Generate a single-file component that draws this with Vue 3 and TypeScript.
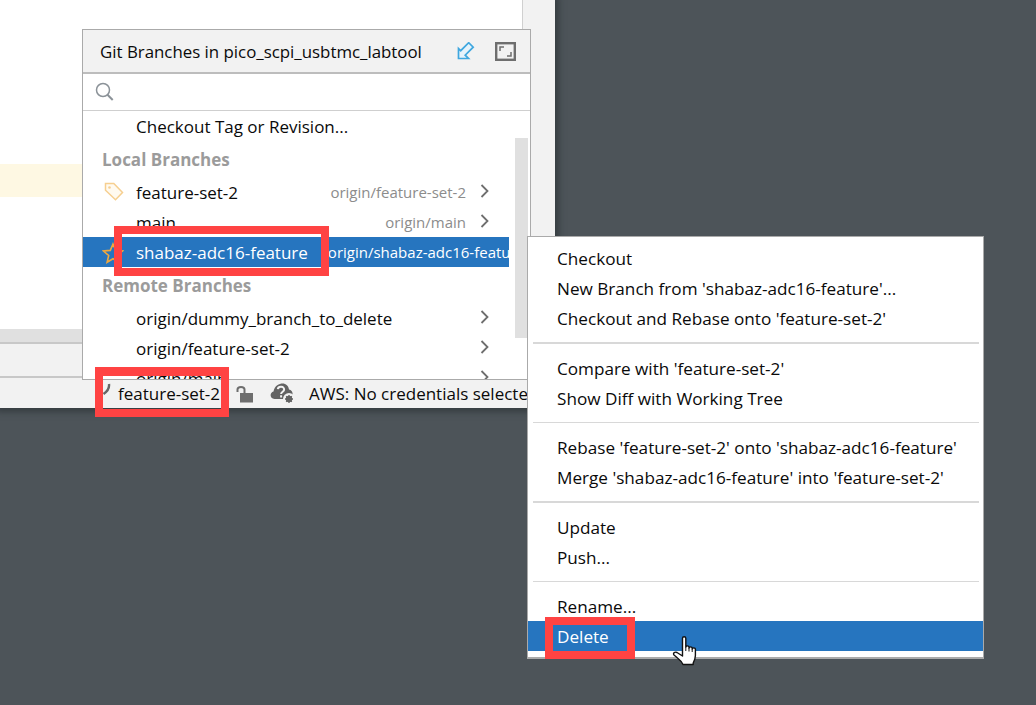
<script setup lang="ts">
interface Branch { name: string; remote?: string; icon?: 'tag' | 'star'; selected?: boolean }
const local: Branch[] = [
  { name: 'feature-set-2', remote: 'origin/feature-set-2', icon: 'tag' },
  { name: 'main', remote: 'origin/main' },
  { name: 'shabaz-adc16-feature', remote: 'origin/shabaz-adc16-feature', icon: 'star', selected: true },
]
const remote: Branch[] = [
  { name: 'origin/dummy_branch_to_delete' },
  { name: 'origin/feature-set-2' },
  { name: 'origin/main' },
]
const menuGroups: string[][] = [
  ['Checkout', "New Branch from 'shabaz-adc16-feature'...", "Checkout and Rebase onto 'feature-set-2'"],
  ["Compare with 'feature-set-2'", 'Show Diff with Working Tree'],
  ["Rebase 'feature-set-2' onto 'shabaz-adc16-feature'", "Merge 'shabaz-adc16-feature' into 'feature-set-2'"],
  ['Update', 'Push...'],
  ['Rename...', 'Delete'],
]
</script>

<template>
  <div class="page">
    <div class="ide">
      <div class="workspace">
        <div class="editor"><div class="highlight"></div></div>
        <div class="gutter"></div>
      </div>
      <div class="band"></div>
      <div class="tools"></div>
      <div class="status">
        <svg class="git" width="9" height="14" viewBox="0 0 9 14"><path d="M7 1c.5 4-1 7-5.500 10" fill="none" stroke="#666" stroke-width="2.400"/></svg>
        <span class="branch">feature-set-2</span>
        <svg class="lock" width="18" height="18" viewBox="0 0 18 18"><path d="M1.500 7V4.600C1.500 1 8.500 1 8.500 4.600V8" fill="none" stroke="#6e6e6e" stroke-width="2"/><rect x="4" y="8" width="13" height="9.500" fill="#6e6e6e"/></svg>
        <svg class="cloud" width="25" height="22" viewBox="0 0 25 22">
          <path d="M4.500 16C-.5 16-.5 9.500 3.500 8.500 4.500 2.500 9.500.5 12.500.5c3.500 0 6 2.500 6.500 6 3 .5 4.500 4 3 6.500l-7 3z" fill="#636363"/>
          <path d="M7.800 6.200c.5-3.500 6.800-3.200 6.300.7-.2 1.800-3 2.100-3 4.200M11.100 12.200v2.300" fill="none" stroke="#f2f2f2" stroke-width="2"/>
          <circle cx="19" cy="16" r="6" fill="#f2f2f2"/>
          <circle cx="19" cy="16" r="2.300" fill="none" stroke="#636363" stroke-width="1.800"/>
          <path d="M19 12v8M15 16h8M16.200 13.200l5.600 5.600M21.800 13.200l-5.600 5.600" stroke="#636363" stroke-width="1.300"/>
        </svg>
        <span class="aws">AWS: No credentials selected</span>
      </div>
    </div>

    <div class="popup">
      <div class="popup-head">
        <span class="title">Git Branches in pico_scpi_usbtmc_labtool</span>
        <svg width="18" height="18" viewBox="0 0 18 18"><path d="M1.500 6.500v10h10l-3.300-3.300 8-8L11.700.7l-8 8z" fill="#e6f3fb" stroke="#3fa7df" stroke-width="1.700"/></svg>
        <svg class="expand" width="21" height="19" viewBox="0 0 21 19"><rect x="1.200" y="1.200" width="18.600" height="16.600" fill="none" stroke="#6e6e6e" stroke-width="2.400"/><path d="M5 9V5h4M16 10v4h-4" fill="none" stroke="#6e6e6e" stroke-width="1.500"/></svg>
      </div>
      <div class="search">
        <svg width="20" height="20" viewBox="0 0 20 20"><circle cx="8" cy="8" r="6.500" fill="none" stroke="#8b9298" stroke-width="1.500"/><path d="M12.500 12.800l5.200 5.200" stroke="#8b9298" stroke-width="2"/></svg>
      </div>
      <div class="list">
        <div class="scrollbar"></div>
        <div class="row"><span class="name">Checkout Tag or Revision...</span></div>
        <div class="group">Local Branches</div>
        <div v-for="b in local" :key="b.name" class="row" :class="{ selected: b.selected }">
          <svg v-if="b.icon === 'tag'" class="row-icon" width="20" height="20" viewBox="0 0 20 20"><path d="M1.500 1.500h8.300l8.700 9-7 7.300-10-9.600z" fill="#fffaf0" stroke="#f6cf90" stroke-width="1.500"/><circle cx="5.500" cy="5.500" r="1.300" fill="#f6cf90"/></svg>
          <svg v-if="b.icon === 'star'" class="row-icon star" width="22" height="22" viewBox="0 0 22 22"><path d="M11 2l2.700 6.400 6.800.6-5.200 4.500 1.600 6.800L11 16.700l-5.900 3.600 1.600-6.800L1.500 9l6.800-.6z" fill="none" stroke="#f0a83e" stroke-width="1.600"/></svg>
          <span class="name">{{ b.name }}</span>
          <span class="remote">{{ b.remote }}</span>
          <svg v-if="!b.selected" class="chev" width="10" height="14" viewBox="0 0 10 14"><path d="M1.500 1l6 6-6 6" fill="none" stroke="#6e6e6e" stroke-width="1.800"/></svg>
        </div>
        <div class="group">Remote Branches</div>
        <div v-for="b in remote" :key="b.name" class="row">
          <span class="name">{{ b.name }}</span>
          <span class="remote"></span>
          <svg class="chev" width="10" height="14" viewBox="0 0 10 14"><path d="M1.500 1l6 6-6 6" fill="none" stroke="#6e6e6e" stroke-width="1.800"/></svg>
        </div>
      </div>
    </div>

    <div class="menu">
      <template v-for="(g, i) in menuGroups" :key="i">
        <div v-if="i > 0" class="sep" :class="{ thick: i === 1 || i === 3 }"></div>
        <div v-for="item in g" :key="item" class="menu-item" :class="{ active: item === 'Delete' }">{{ item }}</div>
      </template>
    </div>

    <div class="mark mark-branch"></div>
    <div class="mark mark-status"></div>
    <div class="mark mark-delete"></div>

    <svg class="hand" width="28" height="33" viewBox="0 0 28 33">
      <path d="M10.500 3.200C10.500 1.200 13.800 1.200 13.800 3.200V12c0-1.500 3.200-1.500 3.200 0v1c0-1.500 3.200-1.500 3.200 0v1c0-1.500 3.200-1.500 3.200 0v6.500c0 3-1 5-2.200 7.500v1.500H11c-1-2.500-3-4.500-5.500-6.500L2 20c-1.500-2 1-3.500 3-2.500l5.500 3.500z" fill="#fff" stroke="#111" stroke-width="1.400" stroke-linejoin="round"/>
      <path d="M13.800 12v4M17 13v3.500M20.200 14v3" fill="none" stroke="#111" stroke-width="1"/>
    </svg>
  </div>
</template>

<style scoped>
.page {
  position: relative;
  width: 1036px;
  height: 705px;
  overflow: hidden;
  background: #4d5459;
  font-family: "Open Sans", "Noto Sans", sans-serif;
  font-size: 17px;
  color: #0a0a0a;
}
.ide {
  width: 555px;
  height: 408px;
  display: flex;
  flex-direction: column;
  background: #f2f2f2;
  box-shadow: 0 0 6px 4px rgba(36, 44, 48, 0.55);
}
.workspace { height: 329px; display: flex; }
.editor {
  width: 522px;
  padding-top: 164px;
  background: #fff;
  border-right: 1px solid #d0d0d0;
}
.highlight { height: 33px; background: #fef8e3; }
.gutter { flex: 1; background: #f2f2f2; }
.band { height: 13px; background: #e0e0e0; border-bottom: 2px solid #c8c8c8; }
.tools { height: 32px; background: #f2f2f2; border-bottom: 2px solid #c8c8c8; }
.status {
  flex: 1;
  display: flex;
  align-items: center;
  padding-left: 102px;
  overflow: hidden;
  white-space: nowrap;
}
.git { margin-right: 7px; margin-top: -6px; }
.branch { width: 110px; }
.lock { margin-left: 8px; margin-top: 2px; }
.cloud { margin-left: 16px; margin-top: 2px; }
.aws { margin-left: 14px; }

.popup {
  position: absolute;
  left: 82px;
  top: 29px;
  width: 449px;
  height: 351px;
  box-sizing: border-box;
  border: 1.500px solid #aaa;
  background: #fff;
  overflow: hidden;
}
.popup-head {
  height: 42px;
  display: flex;
  align-items: center;
  padding: 0 14px 0 17px;
  background: #f2f2f2;
  border-bottom: 2px solid #bdbdbd;
}
.title { flex: 1; font-size: 16.850px; }
.expand { margin-left: 20px; }
.search {
  height: 36px;
  display: flex;
  align-items: center;
  padding-left: 12px;
  border-bottom: 1px solid #cfcfcf;
}
.list { position: relative; height: 269px; overflow: hidden; }
.scrollbar {
  position: absolute;
  left: 432px;
  top: 27px;
  width: 13px;
  height: 200px;
  background: #e0e0e0;
}
.row {
  position: relative;
  width: 426px;
  height: 30px;
  box-sizing: border-box;
  display: flex;
  align-items: center;
  padding-left: 53px;
  white-space: nowrap;
  overflow: hidden;
}
.row-icon { position: absolute; left: 21px; top: 5px; }
.row-icon.star { left: 19px; top: 5px; }
.name { flex: none; }
.remote {
  flex: 1;
  min-width: 0;
  text-align: right;
  color: #8c8c8c;
  font-size: 15px;
  padding-right: 14px;
  margin-left: 20px;
}
.chev { flex: none; margin-right: 19px; margin-top: -2px; }
.row.selected { background: #2675bf; color: #fff; }
.row.selected .remote {
  color: #fff;
  text-align: left;
  padding-right: 0;
  overflow: hidden;
}
.group {
  height: 36px;
  display: flex;
  align-items: center;
  padding-left: 19px;
  font-weight: 700;
  color: #9b9b9b;
}

.menu {
  position: absolute;
  left: 527px;
  top: 236px;
  width: 457px;
  height: 423px;
  box-sizing: border-box;
  padding-top: 6px;
  background: #fff;
  border: 1px solid #aaa;
  border-bottom-width: 2px;
  font-size: 17.150px;
}
.menu-item {
  height: 30px;
  display: flex;
  align-items: center;
  padding-left: 29px;
  white-space: nowrap;
}
.menu-item.active { background: #2675bf; color: #fff; }
.sep {
  height: 1px;
  margin: 9px 4px 9px 5px;
  background: #d8d8d8;
}
.sep.thick { height: 2px; margin-bottom: 9px; }

.mark {
  position: absolute;
  box-sizing: border-box;
  border: 8px solid #ff4343;
}
.mark-branch { left: 114px; top: 226px; width: 215px; height: 50px; }
.mark-status { left: 95px; top: 367px; width: 134px; height: 50px; border-top-width: 9px; }
.mark-delete { left: 545px; top: 617px; width: 90px; height: 42px; }
.hand { position: absolute; left: 672px; top: 635px; }
</style>

<style>
html, body { background: #4d5459; }
</style>
